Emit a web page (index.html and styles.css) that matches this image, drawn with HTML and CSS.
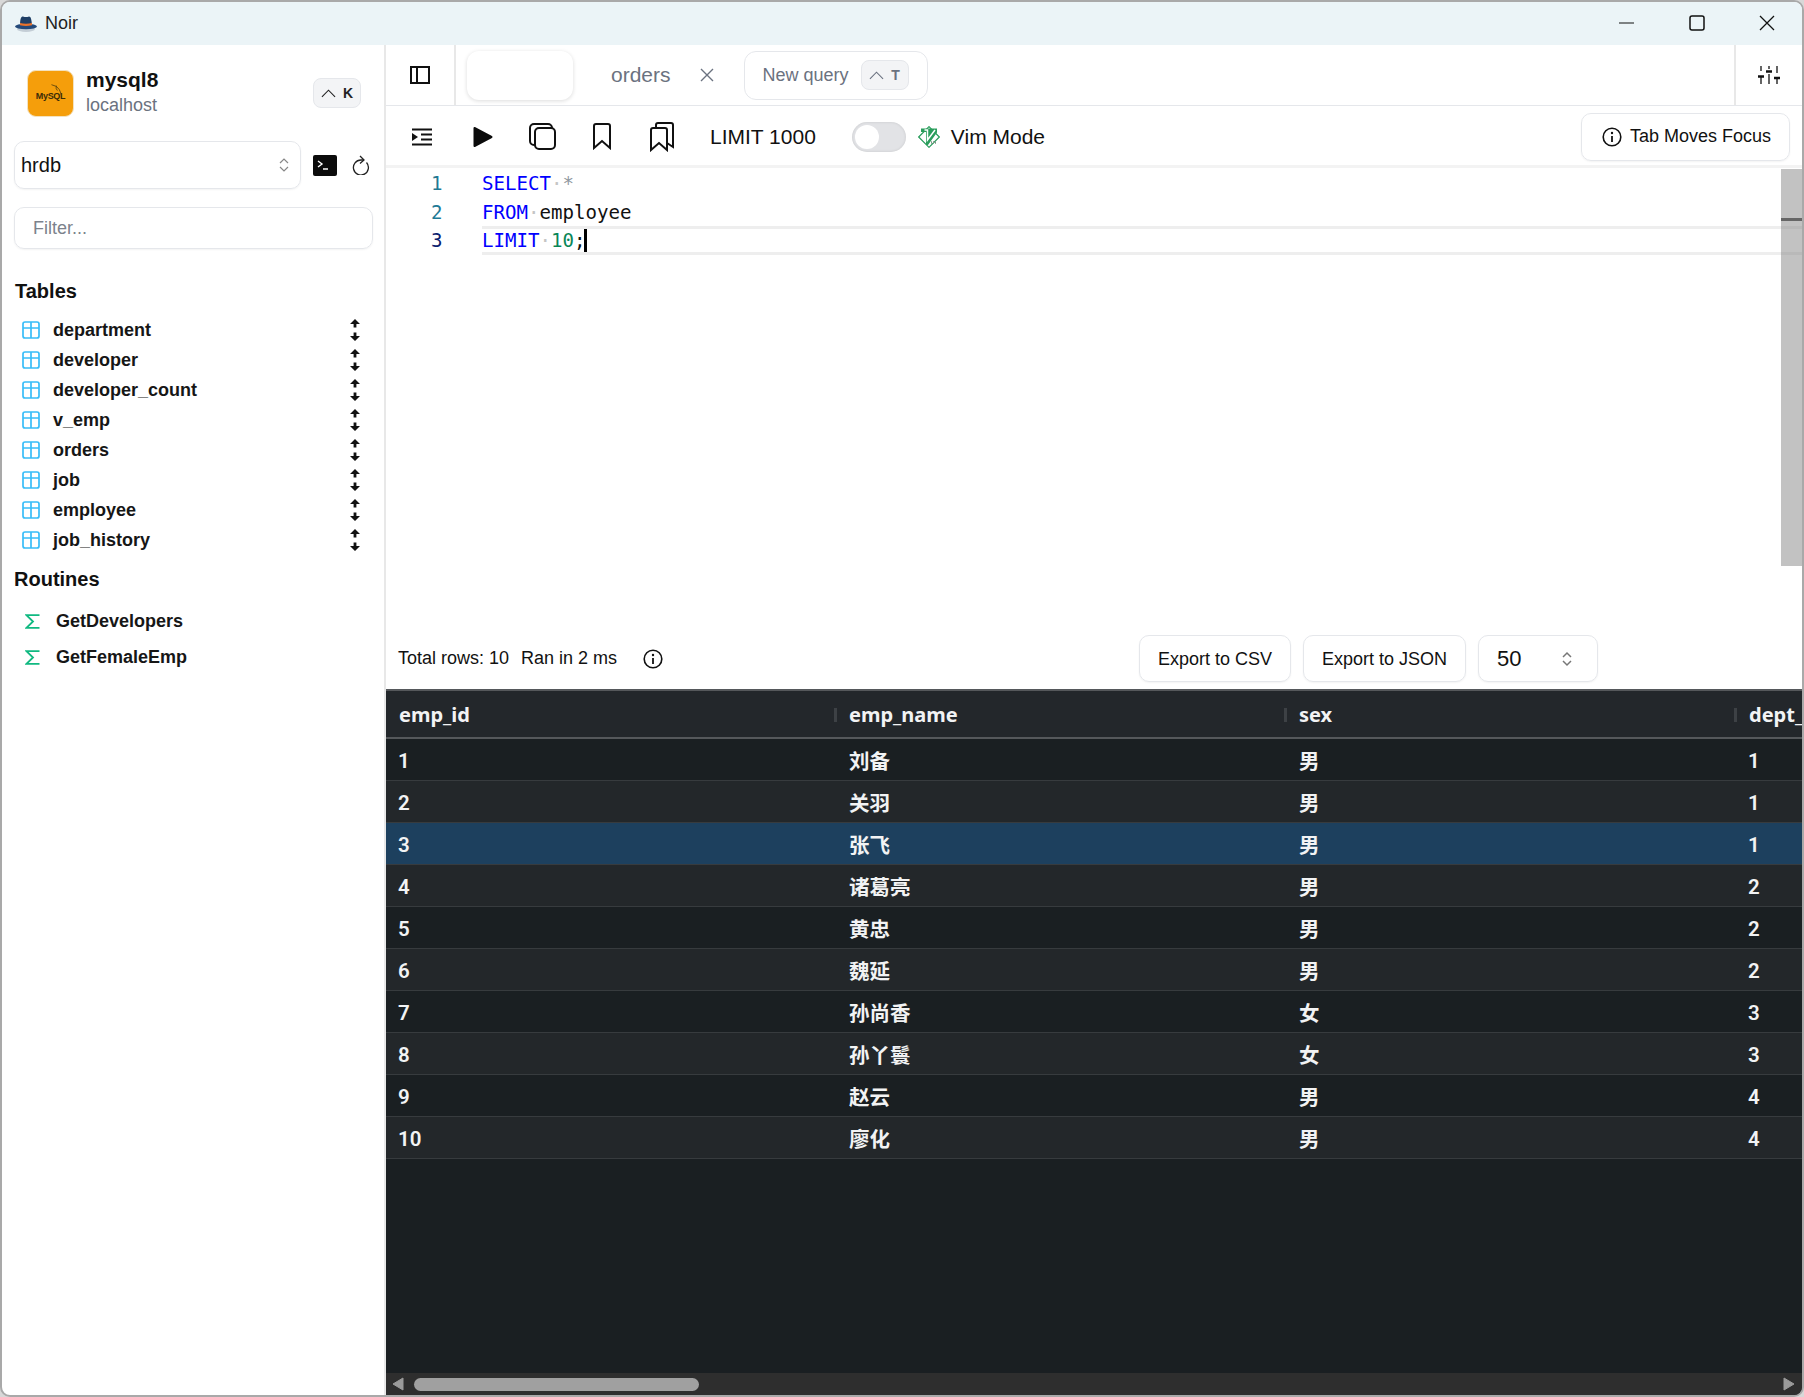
FILE: index.html
```html
<!DOCTYPE html>
<html lang="en">
<head>
<meta charset="utf-8">
<title>Noir</title>
<link rel="stylesheet" href="styles.css">
</head>
<body>
<div class="window">
  <header class="titlebar">
    <div class="app-title">
      <svg class="hat" viewBox="0 0 24 16"><ellipse cx="12" cy="13" rx="9" ry="3" fill="#c4ced6"/><ellipse cx="12" cy="10.500" rx="11" ry="2.800" fill="#23497a"/><path d="M6 9C6 3 7 .5 9 .5q3 1 6 0c2 0 2.500 3 3 8.500q-6 1.500-12 0Z" fill="#1f3f66"/><path d="M6 7q6 1.500 12 0v2.200q-6 1.500-12 0Z" fill="#e8722c"/></svg>
      <span>Noir</span>
    </div>
    <div class="win-controls">
      <svg viewBox="0 0 16 16"><path d="M0 8h15" stroke="#111" stroke-width="1.200"/></svg>
      <svg viewBox="0 0 16 16"><rect x="1" y="1" width="14" height="14" rx="2" fill="none" stroke="#111" stroke-width="1.500"/></svg>
      <svg viewBox="0 0 16 16"><path d="M1 1 15 15M15 1 1 15" stroke="#111" stroke-width="1.300"/></svg>
    </div>
  </header>
  <div class="body">
    <aside class="sidebar">
      <div class="conn">
        <div class="conn-logo">
          <svg viewBox="0 0 46 46"><path d="M24 14q6 1 8 5t2 6m-5-10q-1 3 1 5" fill="none" stroke="#4a3b10" stroke-width=".8"/></svg>
          <span class="mysql-word">MySQL</span>
        </div>
        <div class="conn-text">
          <div class="conn-name">mysql8</div>
          <div class="conn-host">localhost</div>
        </div>
        <div class="kbd kbd-k"><svg viewBox="0 0 16 9"><path d="M1 8 8 1l7 7" fill="none" stroke="#222" stroke-width="1.200"/></svg><span>K</span></div>
      </div>
      <div class="db-row">
        <div class="db-select">
          <span>hrdb</span>
          <svg class="updown" viewBox="0 0 10 16"><path d="M1 6 5 2l4 4M1 10l4 4 4-4" fill="none" stroke="#888" stroke-width="1.200"/></svg>
        </div>
        <svg class="term" viewBox="0 0 24 21"><rect width="24" height="21" rx="2" fill="#0b0b0b"/><path d="m5 6 4 3-4 3" fill="none" stroke="#fff" stroke-width="1.400"/><path d="M10 14h5" stroke="#fff" stroke-width="1.400"/></svg>
        <svg class="refresh" viewBox="0 0 18 20"><path d="M14.500 7.500A7.500 7.500 0 1 1 9 5h3" fill="none" stroke="#222" stroke-width="1.300"/><path d="M8 1l4 4-4 3.500" fill="none" stroke="#222" stroke-width="1.300"/></svg>
      </div>
      <div class="filter">Filter...</div>
      <h2 class="sec-title">Tables</h2>
      <ul class="tables">
        <li><svg class="tbl" viewBox="0 0 18 18"><use href="#tblicon"/></svg><span>department</span><svg class="updn" viewBox="0 0 10 22"><use href="#arrows"/></svg></li>
        <li><svg class="tbl" viewBox="0 0 18 18"><use href="#tblicon"/></svg><span>developer</span><svg class="updn" viewBox="0 0 10 22"><use href="#arrows"/></svg></li>
        <li><svg class="tbl" viewBox="0 0 18 18"><use href="#tblicon"/></svg><span>developer_count</span><svg class="updn" viewBox="0 0 10 22"><use href="#arrows"/></svg></li>
        <li><svg class="tbl" viewBox="0 0 18 18"><use href="#tblicon"/></svg><span>v_emp</span><svg class="updn" viewBox="0 0 10 22"><use href="#arrows"/></svg></li>
        <li><svg class="tbl" viewBox="0 0 18 18"><use href="#tblicon"/></svg><span>orders</span><svg class="updn" viewBox="0 0 10 22"><use href="#arrows"/></svg></li>
        <li><svg class="tbl" viewBox="0 0 18 18"><use href="#tblicon"/></svg><span>job</span><svg class="updn" viewBox="0 0 10 22"><use href="#arrows"/></svg></li>
        <li><svg class="tbl" viewBox="0 0 18 18"><use href="#tblicon"/></svg><span>employee</span><svg class="updn" viewBox="0 0 10 22"><use href="#arrows"/></svg></li>
        <li><svg class="tbl" viewBox="0 0 18 18"><use href="#tblicon"/></svg><span>job_history</span><svg class="updn" viewBox="0 0 10 22"><use href="#arrows"/></svg></li>
      </ul>
      <h2 class="sec-title routines-title">Routines</h2>
      <ul class="routines">
        <li><svg class="sigma" viewBox="0 0 15 15"><path d="M14.500 1.200H1.500L8 7.500 1.500 13.800h13" fill="none" stroke="#10b981" stroke-width="1.800"/></svg><span>GetDevelopers</span></li>
        <li><svg class="sigma" viewBox="0 0 15 15"><path d="M14.500 1.200H1.500L8 7.500 1.500 13.800h13" fill="none" stroke="#10b981" stroke-width="1.800"/></svg><span>GetFemaleEmp</span></li>
      </ul>
    </aside>
    <main class="main">
      <div class="tabbar">
        <div class="tab-toggle"><svg viewBox="0 0 20 18"><path d="M1 1h18v16H1ZM7 1v16" fill="none" stroke="#111" stroke-width="2"/></svg></div>
        <div class="tabs">
          <div class="tab-blank"></div>
          <div class="tab-orders"><span>orders</span><svg viewBox="0 0 16 16"><path d="M2 2 14 14M14 2 2 14" stroke="#6b7280" stroke-width="1.400"/></svg></div>
          <div class="tab-new"><span>New query</span><div class="kbd kbd-t"><svg viewBox="0 0 16 9"><path d="M1 8 8 1l7 7" fill="none" stroke="#6b7280" stroke-width="1.200"/></svg><span>T</span></div></div>
        </div>
        <div class="tab-settings"><svg viewBox="0 0 22 18"><path d="M3 0v5M3 10v8M11 0v3M11 8v10M19 0v7M19 12v6" stroke="#111" stroke-width="1.300"/><path d="M0 10.500h6M8 5.500h6M16 12h6" stroke="#111" stroke-width="2.400"/></svg></div>
      </div>
      <div class="toolbar">
        <svg class="ti ti-indent" viewBox="0 0 20 18"><path d="M0 1.500h20M9 6.500h11M9 11.500h11M0 16.500h20" stroke="#111" stroke-width="2"/><path d="M0 5l6 4-6 4Z" fill="#111"/></svg>
        <svg class="ti ti-play" viewBox="0 0 20 22"><path d="M1.500 2v18l17-9Z" fill="#0b0b0b" stroke="#0b0b0b" stroke-width="2" stroke-linejoin="round"/></svg>
        <svg class="ti ti-copy" viewBox="0 0 27 27"><rect x="6" y="5" width="20" height="21" rx="4" fill="none" stroke="#111" stroke-width="2"/><path d="M6 22H5a4 4 0 0 1-4-4V5a4 4 0 0 1 4-4h14a4 4 0 0 1 4 4" fill="none" stroke="#111" stroke-width="2"/></svg>
        <svg class="ti ti-mark" viewBox="0 0 20 27"><path d="M2 25V3q0-2 2-2h12q2 0 2 2v22l-8-7Z" fill="none" stroke="#111" stroke-width="2"/></svg>
        <svg class="ti ti-marks" viewBox="0 0 26 30"><path d="M2 28V8q0-2 2-2h12q2 0 2 2v20l-8-7Z" fill="none" stroke="#111" stroke-width="2"/><path d="M7 6V3q0-2 2-2h13q2 0 2 2v22l-6-4" fill="none" stroke="#111" stroke-width="2"/></svg>
        <span class="tool-text limit">LIMIT 1000</span>
        <div class="toggle"><div class="knob"></div></div>
        <svg class="vim" viewBox="0 0 22 22"><path d="M11 .7 21.300 11 11 21.300.7 11Z" fill="#fff" stroke="#2a9d5c" stroke-width="1.200"/><path d="M3 2.500h16v4L10 19H8V6H3Z" fill="#2a9d5c"/><path d="M6.500 4h3v10L17 4" fill="none" stroke="#fff" stroke-width="1.500"/><path d="M13 16.500h5" stroke="#7d9787" stroke-width="2.500" stroke-dasharray="1 1"/></svg>
        <span class="tool-text">Vim Mode</span>
        <div class="tab-focus"><svg viewBox="0 0 20 20"><circle cx="10" cy="10" r="8.800" fill="none" stroke="#111" stroke-width="1.600"/><path d="M10 9v6" stroke="#111" stroke-width="1.800"/><circle cx="10" cy="6" r="1.200" fill="#111"/></svg><span>Tab Moves Focus</span></div>
      </div>
      <div class="editor">
        <div class="code-line"><span class="ln ln1">1</span><span class="code"><i class="kw">SELECT</i><i class="dot">·</i><i class="star">*</i></span></div>
        <div class="code-line"><span class="ln ln2">2</span><span class="code"><i class="kw">FROM</i><i class="dot">·</i>employee</span></div>
        <div class="code-line current"><span class="ln ln3">3</span><span class="code"><i class="kw">LIMIT</i><i class="dot">·</i><i class="num">10</i>;<b class="caret"></b></span></div>
        <div class="v-scroll"><div class="v-tick"></div></div>
      </div>
      <div class="status">
        <span>Total rows: 10</span>
        <span class="ran">Ran in 2 ms</span>
        <svg class="status-info" viewBox="0 0 20 20"><circle cx="10" cy="10" r="8.800" fill="none" stroke="#111" stroke-width="1.600"/><path d="M10 9v6" stroke="#111" stroke-width="1.800"/><circle cx="10" cy="6" r="1.200" fill="#111"/></svg>
        <div class="status-right">
          <div class="btn btn-csv">Export to CSV</div>
          <div class="btn btn-json">Export to JSON</div>
          <div class="btn page-size"><span>50</span><svg viewBox="0 0 10 16"><path d="M1 6 5 2l4 4M1 10l4 4 4-4" fill="none" stroke="#777" stroke-width="1.500"/></svg></div>
        </div>
      </div>
      <div class="grid-wrap">
        <div class="grid-scroll">
          <table class="grid">
            <thead><tr><th>emp_id</th><th>emp_name</th><th>sex</th><th>dept_id</th></tr></thead>
            <tbody>
              <tr><td>1</td><td>刘备</td><td>男</td><td>1</td></tr>
              <tr><td>2</td><td>关羽</td><td>男</td><td>1</td></tr>
              <tr class="sel"><td>3</td><td>张飞</td><td>男</td><td>1</td></tr>
              <tr><td>4</td><td>诸葛亮</td><td>男</td><td>2</td></tr>
              <tr><td>5</td><td>黄忠</td><td>男</td><td>2</td></tr>
              <tr><td>6</td><td>魏延</td><td>男</td><td>2</td></tr>
              <tr><td>7</td><td>孙尚香</td><td>女</td><td>3</td></tr>
              <tr><td>8</td><td>孙丫鬟</td><td>女</td><td>3</td></tr>
              <tr><td>9</td><td>赵云</td><td>男</td><td>4</td></tr>
              <tr><td>10</td><td>廖化</td><td>男</td><td>4</td></tr>
            </tbody>
          </table>
        </div>
        <div class="h-scroll">
          <svg class="arr" viewBox="0 0 12 14"><path d="M11 1v12L1 7Z" fill="#9a9a9a" stroke="#9a9a9a" stroke-linejoin="round"/></svg>
          <div class="h-track"><div class="h-thumb"></div></div>
          <svg class="arr" viewBox="0 0 12 14"><path d="M1 1v12l10-6Z" fill="#9a9a9a" stroke="#9a9a9a" stroke-linejoin="round"/></svg>
        </div>
      </div>
    </main>
  </div>
</div>
<svg class="defs" aria-hidden="true">
  <defs>
    <g id="tblicon" fill="none" stroke="#38bdf8" stroke-width="1.700"><rect x="1" y="1" width="16" height="16" rx="2"/><path d="M1 7h16M9 1v16"/></g>
    <g id="arrows" fill="#111"><path d="M5 0 10 5H6.400V8.500H3.600V5H0ZM5 22 0 17H3.600V13.500H6.400V17H10Z"/></g>
  </defs>
</svg>
</body>
</html>
```
FILE: styles.css
```css
* { box-sizing: border-box; }
html, body { margin: 0; height: 100%; }
body { background: #d8d8d8; font-family: Inter, "Liberation Sans", "Noto Sans CJK SC", sans-serif; color: #111; overflow: hidden; }
ul { list-style: none; margin: 0; padding: 0; }
h2 { margin: 0; }
i { font-style: normal; }
.defs { position: absolute; width: 0; height: 0; }

.window { height: 1397px; border: 2px solid #a9a9a9; border-radius: 10px; overflow: hidden; display: flex; flex-direction: column; background: #fff; }

.titlebar { height: 43px; flex: none; background: #ebf4f7; display: flex; align-items: center; justify-content: space-between; }
.app-title { display: flex; align-items: center; gap: 7px; padding-left: 12px; font: 400 18px "Liberation Sans", sans-serif; color: #222; }
.hat { width: 24px; height: 16px; }
.win-controls { display: flex; align-items: center; gap: 54px; padding: 0 27px 2px 0; }
.win-controls svg { width: 16px; height: 16px; }

.body { flex: 1; display: flex; min-height: 0; }

.sidebar { width: 384px; flex: none; border-right: 2px solid #e8e8e8; padding: 24px 12px 0 12px; font-family: "Liberation Sans", sans-serif; }
.conn { display: flex; align-items: center; height: 48px; padding-left: 13px; }
.conn-logo { width: 47px; height: 47px; background: #f59e0b; border: 1px solid #f3e2c0; border-radius: 9px; position: relative; flex: none; display: flex; align-items: center; justify-content: center; overflow: hidden; }
.conn-logo svg { position: absolute; inset: 0; width: 100%; height: 100%; }
.mysql-word { font: 700 9px "Liberation Sans", sans-serif; letter-spacing: -.3px; color: #3c2c08; padding-top: 5px; }
.conn-text { margin-left: 12px; flex: 1; padding-bottom: 2px; }
.conn-name { font-size: 21px; font-weight: 700; line-height: 25px; color: #111; }
.conn-host { font-size: 18px; line-height: 26px; color: #6b7280; }
.kbd { display: flex; align-items: center; justify-content: center; background: #f3f4f6; border: 1px solid #e5e7eb; border-radius: 8px; font-weight: 700; }
.kbd-k { width: 48px; height: 30px; gap: 7px; font-size: 14px; margin-right: 11px; color: #222; }
.kbd-k svg { width: 15px; height: 9px; }
.db-row { display: flex; align-items: center; margin-top: 24px; }
.db-select { width: 287px; height: 48px; border: 1px solid #e5e7eb; border-radius: 10px; display: flex; align-items: center; justify-content: space-between; padding: 0 11px 0 6px; font-size: 20px; box-shadow: 0 1px 2px rgba(0,0,0,.05); }
.updown { width: 10px; height: 16px; }
.term { width: 24px; height: 21px; margin-left: 12px; }
.refresh { width: 18px; height: 20px; margin-left: 15px; }
.filter { width: 359px; height: 42px; margin-top: 18px; border: 1px solid #e5e7eb; border-radius: 10px; display: flex; align-items: center; padding-left: 18px; font-size: 18px; color: #7c828c; box-shadow: 0 1px 2px rgba(0,0,0,.05); }
.sec-title { font-size: 20px; font-weight: 700; line-height: 24px; margin-top: 30px; padding-left: 1px; color: #111; }
.tables { margin-top: 12px; }
.tables li { height: 30px; display: flex; align-items: center; padding-left: 8px; font-size: 18px; font-weight: 700; color: #161616; }
.tbl { width: 18px; height: 18px; flex: none; }
.tables span { margin-left: 13px; flex: 1; }
.updn { width: 10px; height: 22px; margin-right: 12px; flex: none; }
.routines-title { margin-top: 12px; padding-left: 0; }
.routines { margin-top: 12px; }
.routines li { height: 36px; display: flex; align-items: center; padding-left: 11px; font-size: 18px; font-weight: 700; color: #161616; }
.sigma { width: 15px; height: 15px; flex: none; }
.routines span { margin-left: 16px; }

.main { flex: 1; min-width: 0; display: flex; flex-direction: column; font-family: "Liberation Sans", sans-serif; }

.tabbar { height: 61px; flex: none; display: flex; border-bottom: 1.500px solid #e5e7eb; }
.tab-toggle { width: 70px; flex: none; border-right: 2px solid #e8e8e8; display: flex; align-items: center; justify-content: center; }
.tab-toggle svg { width: 20px; height: 18px; margin-right: 1px; }
.tabs { flex: 1; display: flex; align-items: center; padding-left: 11px; }
.tab-blank { width: 106px; height: 49px; border-radius: 12px; background: #fff; box-shadow: 0 1px 4px rgba(0,0,0,.14); }
.tab-orders { display: flex; align-items: center; margin-left: 38px; font-size: 21px; color: #6b7280; }
.tab-orders svg { width: 16px; height: 16px; margin-left: 28px; }
.tab-new { margin-left: 29px; width: 184px; height: 49px; border: 1.500px solid #e5e7eb; border-radius: 12px; display: flex; align-items: center; padding-left: 18px; font-size: 18px; color: #6b7280; }
.kbd-t { width: 48px; height: 30px; gap: 7px; font-size: 14px; margin-left: 12px; color: #6b7280; }
.kbd-t svg { width: 15px; height: 9px; }
.tab-settings { width: 68px; flex: none; border-left: 2px solid #e8e8e8; display: flex; align-items: center; justify-content: center; }
.tab-settings svg { width: 22px; height: 18px; margin-right: 0; }

.toolbar { height: 62px; flex: none; display: flex; align-items: center; padding: 2px 0 0 26px; border-bottom: 3px solid #f3f3f3; }
.ti { flex: none; }
.ti-indent { width: 20px; height: 18px; }
.ti-play { width: 20px; height: 22px; margin-left: 41px; }
.ti-copy { width: 27px; height: 27px; margin-left: 36px; }
.ti-mark { width: 20px; height: 27px; margin-left: 36px; }
.ti-marks { width: 26px; height: 30px; margin-left: 37px; }
.tool-text { font-size: 21px; color: #111; }
.limit { margin-left: 35px; }
.toggle { width: 54px; height: 30px; margin-left: 36px; border-radius: 15px; background: #e2e3e6; padding: 3px; box-shadow: inset 0 0 3px rgba(0,0,0,.12); }
.knob { width: 24px; height: 24px; border-radius: 50%; background: #fff; }
.vim { width: 22px; height: 22px; margin: 0 11px 0 12px; }
.tab-focus { margin-left: auto; margin-right: 12px; width: 209px; height: 48px; border: 1.500px solid #e5e7eb; border-radius: 10px; display: flex; align-items: center; padding-left: 20px; font-size: 18px; box-shadow: 0 1px 2px rgba(0,0,0,.05); }
.tab-focus svg { width: 20px; height: 20px; margin-right: 8px; }

.editor { height: 398px; flex: none; padding-top: 1px; position: relative; font: 19.100px/28.500px "DejaVu Sans Mono", monospace; color: #111; overflow: hidden; }
.code-line { height: 28.500px; display: flex; position: relative; }
.ln { width: 96px; flex: none; padding: 1px 0 0 45px; color: #237893; }
.ln2 { color: #1f7a96; }
.ln3 { color: #0b216f; }
.code { white-space: pre; padding-top: 1px; }
.kw { color: #0000ff; }
.dot { color: #c5c5c5; }
.star { color: #8f98a0; }
.num { color: #098658; }
.caret { display: inline-block; width: 3px; height: 28px; margin-left: -1px; background: #000; vertical-align: top; }
.current::after { content: ""; position: absolute; left: 96px; right: 0; top: 0; bottom: 0; border: solid #eeeeee; border-width: 3px 0; pointer-events: none; }
.v-scroll { position: absolute; right: 0; top: 1px; width: 21px; height: 100%; background: rgba(120,120,120,.45); }
.v-tick { height: 3px; background: #666; margin-top: 49px; }

.status { height: 123px; flex: none; display: flex; align-items: center; padding: 69px 0 7px 12px; font-size: 18px; color: #111; }
.ran { margin-left: 12px; }
.status-info { width: 20px; height: 20px; margin-left: 26px; }
.status-right { margin-left: auto; display: flex; gap: 12px; margin-right: 204px; }
.btn { height: 47px; border: 1.500px solid #e5e7eb; border-radius: 10px; display: flex; align-items: center; justify-content: center; padding-top: 1px; box-shadow: 0 1px 2px rgba(0,0,0,.05); }
.btn-csv { width: 152px; }
.btn-json { width: 163px; }
.page-size { width: 120px; justify-content: space-between; padding: 0 25px 0 18px; font-size: 22px; }
.page-size svg { width: 10px; height: 16px; }

.grid-wrap { flex: 1; min-height: 0; display: flex; flex-direction: column; background: #1a1f22; border-top: 2px solid #55585b; }
.grid-scroll { flex: 1; min-height: 0; overflow: hidden; }
.grid { border-collapse: collapse; table-layout: fixed; width: 1800px; font-family: "Noto Sans", "Noto Sans CJK SC", sans-serif; color: #f2f3f4; }
.grid th { height: 47px; background: #23272b; font-size: 20px; font-weight: 700; text-align: left; padding: 0 0 0 13px; border-bottom: 2px solid #55585b; position: relative; white-space: nowrap; }
.grid th + th::before { content: ""; position: absolute; left: -2px; top: 17px; width: 3px; height: 14px; background: #3d4145; }
.grid td { height: 42px; font-family: Roboto, "Noto Sans CJK SC", sans-serif; font-size: 20.500px; font-weight: 600; padding: 2px 0 0 13px; border-bottom: 1px solid #373b3e; }
.grid td:first-child, .grid td:last-child { padding: 4px 0 0 12px; }
.grid tbody tr:nth-child(odd) { background: #1a1f22; }
.grid tbody tr:nth-child(even) { background: #23272a; }
.grid tbody tr.sel { background: #1d405e; }

.h-scroll { height: 22px; flex: none; background: #2e2e2e; display: flex; align-items: center; padding: 0 7px 0 6px; }
.arr { width: 12px; height: 14px; flex: none; }
.h-track { flex: 1; padding-left: 10px; }
.h-thumb { width: 285px; height: 13px; border-radius: 7px; background: #a0a0a0; }
```
